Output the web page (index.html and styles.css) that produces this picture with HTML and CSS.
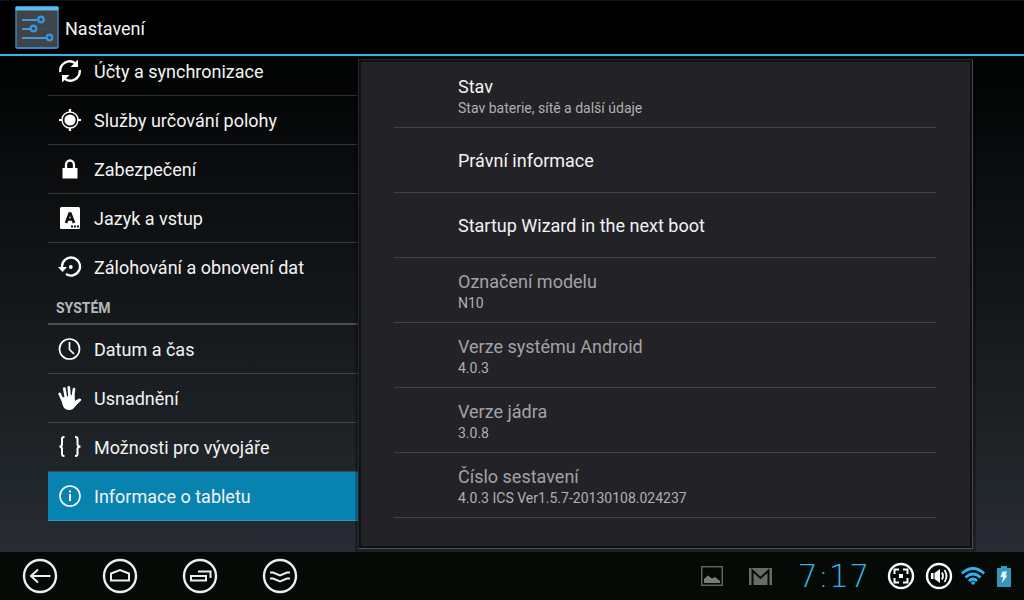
FILE: index.html
```html
<!DOCTYPE html>
<html lang="cs">
<head>
  <meta charset="UTF-8" />
  <meta name="viewport" content="width=device-width, initial-scale=1.0"/>
  <title>Nastavení</title>
  <link rel="stylesheet" href="styles.css">
</head>
<body>
  <header class="topbar">
    <svg class="logo" width="44" height="44" viewBox="0 0 44 44">
      <rect x="1" y="1" width="42" height="41" rx="1" fill="#434343" stroke="#2d86c9" stroke-width="1.5"/>
      <rect x="0.5" y="0.5" width="43" height="4" rx="1" fill="#55bdf0"/>
      <path d="M2 42h40" stroke="#2f8fdb" stroke-width="1.5"/>
      <path d="M27 14h10M21 23h16" stroke="#27506f" stroke-width="2"/>
      <path d="M7 14h17M7 23h10M7 32h25" stroke="#3c9be0" stroke-width="2"/>
      <g fill="#3a4a58" stroke="#3596e0" stroke-width="2.2">
        <circle cx="26" cy="13.5" r="2.8"/>
        <circle cx="18.5" cy="22.5" r="2.8"/>
        <circle cx="34.5" cy="31.5" r="2.8"/>
      </g>
    </svg>
    <h1>Nastavení</h1>
  </header>

  <main class="content">
    <nav class="sidebar">
      <ul>
        <li><a href="#sync">
          <svg class="icon" viewBox="0 0 24 24">
            <path d="M2.3 13A9.5 9.5 0 0 1 17 4M21.7 11A9.5 9.5 0 0 1 7 20" fill="none" stroke="#fff" stroke-width="2.3"/>
            <path d="M20 0.500v7.500h-7.500zM4 23.500v-7.500h7.500z" fill="#fff"/>
          </svg>
          Účty a synchronizace</a></li>
        <li><a href="#location">
          <svg class="icon" viewBox="0 0 24 24">
            <circle cx="12" cy="12" r="5.6" fill="#fff"/>
            <circle cx="12" cy="12" r="8" fill="none" stroke="#fff" stroke-width="1.4"/>
            <path d="M12 1v3M12 20v3M1 12h3M20 12h3" stroke="#fff" stroke-width="2.2"/>
          </svg>
          Služby určování polohy</a></li>
        <li><a href="#security">
          <svg class="icon" viewBox="0 0 24 24">
            <path d="M4.500 11h15v10.500h-15z" fill="#fff"/>
            <path d="M8 12V8a4 4.500 0 0 1 8 0v4" fill="none" stroke="#fff" stroke-width="2.3"/>
          </svg>
          Zabezpečení</a></li>
        <li><a href="#language">
          <svg class="icon" viewBox="0 0 24 24">
            <rect x="2" y="1" width="20" height="22" rx="1.5" fill="#fff"/>
            <path d="M8 17L11.5 7.5h1L16 17M9.5 13.5h5" fill="none" stroke="#111" stroke-width="2.6"/>
            <path d="M13 20.5h2M16 20.5h2M19 20.5h2" stroke="#111" stroke-width="2"/>
          </svg>
          Jazyk a vstup</a></li>
        <li class="last"><a href="#backup">
          <svg class="icon" viewBox="0 0 24 24">
            <path d="M4 12A9 9 0 1 1 8 19" fill="none" stroke="#fff" stroke-width="2.3"/>
            <path d="M0 12h9l-4.5 5z" fill="#fff"/>
            <circle cx="12.8" cy="12" r="1.9" fill="#fff"/>
          </svg>
          Zálohování a obnovení dat</a></li>
      </ul>
      <h2>SYSTÉM</h2>
      <ul>
        <li><a href="#date">
          <svg class="icon" viewBox="0 0 24 24">
            <circle cx="11.5" cy="12" r="10" fill="none" stroke="#fff" stroke-width="1.7"/>
            <path d="M11.5 5v7.5l4.5 4.5" fill="none" stroke="#fff" stroke-width="1.7"/>
          </svg>
          Datum a čas</a></li>
        <li><a href="#accessibility">
          <svg class="icon" viewBox="0 0 24 24">
            <path d="M3.8 12.500L1.700 8M7.600 10L6.300 2.600M11.500 10L10.800 1.400M15 10L16 3" stroke="#fff" stroke-width="2.7" stroke-linecap="round"/>
            <path d="M2.500 12L16.500 8.500L17 15L21 12.500Q24 12.500 23 14.500L17.500 20Q15 24 11.500 24Q6.500 24 5 20Z" fill="#fff"/>
          </svg>
          Usnadnění</a></li>
        <li><a href="#developer">
          <svg class="icon" viewBox="0 0 24 24">
            <path d="M6.500 2H6Q4 2 4 4V9Q4 11.500 1.500 11.500Q4 11.500 4 14V19Q4 21 6 21H6.500M17 2H17.500Q19.500 2 19.500 4V9Q19.500 11.500 22.500 11.500Q19.500 11.500 19.500 14V19Q19.500 21 17.500 21H17" fill="none" stroke="#fff" stroke-width="2"/>
          </svg>
          Možnosti pro vývojáře</a></li>
        <li class="active"><a href="#about">
          <svg class="icon" viewBox="0 0 24 24">
            <circle cx="12" cy="12" r="10" fill="none" stroke="#fff" stroke-width="1.6"/>
            <path d="M12 10v7M12 6.5v2" stroke="#fff" stroke-width="2"/>
          </svg>
          Informace o tabletu</a></li>
      </ul>
    </nav>

    <section class="panel">
      <ul class="prefs">
        <li>
          <h3>Stav</h3>
          <p>Stav baterie, sítě a další údaje</p>
        </li>
        <li><h3>Právní informace</h3></li>
        <li><h3>Startup Wizard in the next boot</h3></li>
        <li class="disabled">
          <h3>Označení modelu</h3>
          <p>N10</p>
        </li>
        <li class="disabled">
          <h3>Verze systému Android</h3>
          <p>4.0.3</p>
        </li>
        <li class="disabled">
          <h3>Verze jádra</h3>
          <p>3.0.8</p>
        </li>
        <li class="disabled">
          <h3>Číslo sestavení</h3>
          <p>4.0.3 ICS Ver1.5.7-20130108.024237</p>
        </li>
      </ul>
    </section>
  </main>

  <footer class="systembar">
    <div class="nav-keys">
      <button type="button" aria-label="Zpět">
        <svg width="36" height="36" viewBox="0 0 36 36">
          <circle class="ring" cx="18" cy="18" r="16"/>
          <path class="line" d="M28.5 18H9.5M16 11.5L9 18l7 6.5"/>
        </svg>
      </button>
      <button type="button" aria-label="Domů">
        <svg width="36" height="36" viewBox="0 0 36 36">
          <circle class="ring" cx="18" cy="18" r="16"/>
          <path class="line" d="M9 22.5V15.5L18 12l9 3.5v7z"/>
        </svg>
      </button>
      <button type="button" aria-label="Poslední aplikace">
        <svg width="36" height="36" viewBox="0 0 36 36">
          <circle class="ring" cx="18" cy="18" r="16"/>
          <path class="line" d="M9 18h15v4.500H9zM16 13.500h12.500V20"/>
        </svg>
      </button>
      <button type="button" aria-label="Skrýt lištu">
        <svg width="36" height="36" viewBox="0 0 36 36">
          <circle class="ring" cx="18" cy="18" r="16"/>
          <path class="line" d="M8 14.500h3L18 17.500l7-3h3M8 20.500h3L18 23.500l7-3h3"/>
        </svg>
      </button>
    </div>

    <div class="status">
      <svg class="picture" width="22" height="20" viewBox="0 0 22 20">
        <rect x="0.7" y="0.7" width="20.6" height="18.6" fill="none" stroke="#646664" stroke-width="1.4"/>
        <path d="M3 17v-4l4-3.5 4 3 3-1.5 5 4v2z" fill="#7b7d7b"/>
      </svg>
      <svg class="mail" width="23" height="17" viewBox="0 0 23 17">
        <rect width="23" height="17" fill="#696b69"/>
        <path d="M3.5 17V2.500l8 7.500 8-7.500V17" fill="none" stroke="#0a0d0a" stroke-width="2"/>
      </svg>
      <time class="clock">7:17</time>
      <button type="button" aria-label="Snímek obrazovky">
        <svg width="28" height="28" viewBox="0 0 28 28">
          <circle class="status-ring" cx="14" cy="14" r="12"/>
          <path d="M7.5 12V7.5H12M16 7.5h4.5V12M20.5 16v4.5H16M12 20.5H7.5V16" fill="none" stroke="#fff" stroke-width="2"/>
          <path d="M12 12h4v4h-4z" fill="#fff"/>
        </svg>
      </button>
      <button type="button" aria-label="Hlasitost">
        <svg width="28" height="28" viewBox="0 0 28 28">
          <circle class="status-ring" cx="14" cy="14" r="12"/>
          <path d="M6 11h2.5v6H6zM9.5 11L15 7v14l-5.5-4z" fill="#fff"/>
          <path d="M17 10.5q2 3.5 0 7M19.5 8q4 6 0 12" fill="none" stroke="#fff" stroke-width="1.8"/>
        </svg>
      </button>
      <svg class="wifi" width="24" height="18" viewBox="0 0 24 18">
        <path d="M0.8 6.5Q12-3.5 23.2 6.5M4.5 10.5Q12 3.5 19.5 10.5M8 14Q12 10 16 14" fill="none" stroke="#2fb3ee" stroke-width="2.7"/>
        <circle cx="12" cy="16" r="1.8" fill="#2fb3ee"/>
      </svg>
      <svg class="battery" width="14" height="21" viewBox="0 0 14 21">
        <path d="M0 2h4V0h6v2h4v19H0z" fill="#3795bd"/>
        <path d="M5.500 5.500h4.500L8.500 9.500h2L5 17l1-6H3.500z" fill="#e8f4f8"/>
      </svg>
    </div>
  </footer>
</body>
</html>
```
FILE: styles.css
```css
:root {
  --holo-blue: #33b5e5;
  --selected: #0882ae;
  --panel-bg: #232227;
  --text: #f3f3f3;
  --text-dim: #b0b0b0;
}

* { box-sizing: border-box; }

body {
  font-family: Roboto, "Noto Sans", sans-serif;
  background: linear-gradient(#000 0%, #020303 10%, #14171a 50%, #22272b 82%, #282b35 92%);
  color: var(--text);
  margin: 0;
  min-height: 100vh;
  display: flex;
  flex-direction: column;
}

h1, h2, h3, p, ul {
  margin: 0;
  padding: 0;
  font-weight: 400;
}
ul { list-style: none; }

.topbar {
  display: flex;
  align-items: center;
  gap: 6px;
  height: 56px;
  padding: 0 15px;
  background: #000;
  border-top: 1px solid #111;
  border-bottom: 2px solid var(--holo-blue);
}
.topbar h1 {
  padding-top: 2px;
  font-size: 18px;
}

.content {
  flex: 1;
  display: flex;
  padding: 0 51px 0 48px;
  overflow: hidden;
}

/* list is scrolled a little under the top bar */
.sidebar {
  width: 310px;
  margin-top: -9px;
}
.sidebar a {
  display: flex;
  align-items: center;
  gap: 12px;
  height: 48px;
  padding-left: 10px;
  color: inherit;
  font-size: 18px;
  text-decoration: none;
}
.sidebar li { border-bottom: 1px solid rgba(255, 255, 255, 0.17); }
.sidebar li.last { border-bottom: none; }
.sidebar li.active { background: var(--selected); }
.sidebar h2 {
  height: 34px;
  padding-left: 8px;
  border-bottom: 2px solid #4b4d50;
  color: #b8b8b8;
  font-size: 14px;
  font-weight: 700;
  line-height: 34px;
}

.icon {
  width: 24px;
  height: 24px;
}

.panel {
  position: relative;
  flex: 1;
  margin: 3px 0;
  padding: 2px;
  background: #0f1012;
  border: 1px solid #27282a;
  border-right-color: #45474a;
  border-bottom-color: #505255;
  box-shadow: 0 0 0 3px rgba(0, 0, 0, 0.25);
}

.prefs {
  height: 100%;
  padding: 1px 34px 28px 33px;
  background: var(--panel-bg);
}
.prefs li {
  display: flex;
  flex-direction: column;
  justify-content: center;
  height: 65px;
  padding: 2px 0 0 64px;
  border-bottom: 1px solid #434246;
}
.prefs h3 {
  font-size: 18px;
  line-height: 24px;
}
.prefs p {
  color: var(--text-dim);
  font-size: 14px;
  line-height: 18px;
}
.prefs .disabled h3 { color: #a3a3a5; }

.systembar {
  display: flex;
  align-items: center;
  justify-content: space-between;
  height: 48px;
  padding: 0 13px 0 0;
  background: #060a07;
}
.systembar button {
  display: flex;
  align-items: center;
  justify-content: center;
  padding: 0;
  background: none;
  border: none;
  cursor: pointer;
}
.nav-keys { display: flex; }
.nav-keys button {
  width: 80px;
  height: 48px;
}
.ring, .line {
  fill: none;
  stroke: #eee;
  stroke-width: 2;
}
.ring { stroke-width: 2.4; }
.status-ring {
  fill: none;
  stroke: #fff;
  stroke-width: 2.4;
}

.status {
  display: flex;
  align-items: center;
  gap: 10px;
}
.picture { margin-right: 16px; }
.mail { margin-right: 8px; }
.clock {
  width: 87px;
  color: var(--holo-blue);
  font-family: "DejaVu Sans Light", "DejaVu Sans", sans-serif;
  font-size: 32px;
  font-weight: 200;
  line-height: 36px;
  text-align: center;
}
.wifi { margin-left: -2px; }
.battery { margin-left: 2px; }
```
